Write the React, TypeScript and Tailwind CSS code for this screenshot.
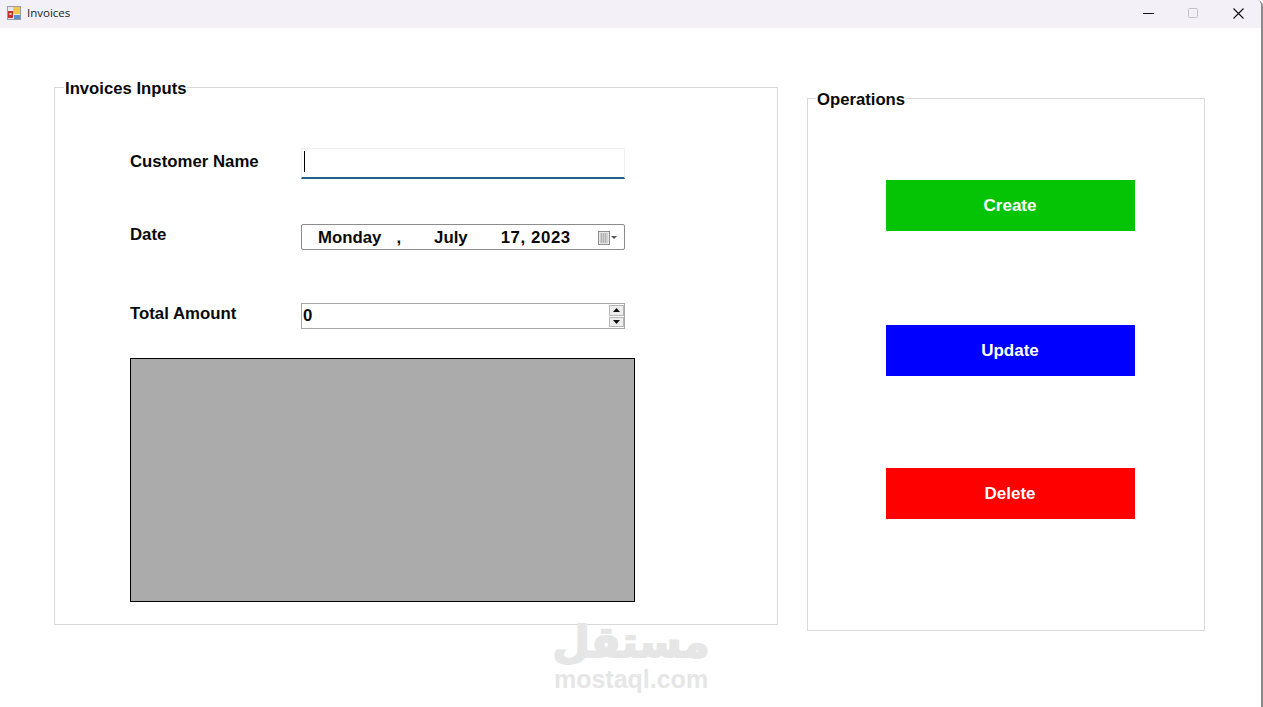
import React from 'react';

function AppIcon() {
  return (
    <svg width="14" height="14" viewBox="0 0 14 14" className="shrink-0 -mt-[2px]">
      <rect x="0.5" y="0.5" width="13" height="13" fill="#e9e6ee" stroke="#9a9aa5" />
      <rect x="1" y="5" width="5" height="7" fill="#c8312b" />
      <rect x="2.5" y="7" width="2" height="2" fill="#f3d0c8" />
      <rect x="6" y="1" width="7" height="7" fill="#f2c84b" />
      <rect x="7" y="9" width="6" height="4" fill="#5b8fd0" />
    </svg>
  );
}

function TitleBar() {
  return (
    <div className="h-[28px] bg-[#f3f0f7] flex items-center pl-[7px] shrink-0">
      <AppIcon />
      <span className="ml-[6px] -mt-[2px] text-[11.5px] text-[#1a1a1a] font-['Open_Sans',sans-serif]">Invoices</span>
      <div className="ml-auto flex items-center pr-[17px] -mt-[2px]">
        <svg width="11" height="11" viewBox="0 0 11 11">
          <path d="M0 5.5H11" stroke="#111" strokeWidth="1.2" />
        </svg>
        <svg width="11" height="11" viewBox="0 0 11 11" className="ml-[34px]">
          <rect x="0.5" y="0.5" width="9" height="9" rx="1" fill="none" stroke="#c4c2c8" />
        </svg>
        <svg width="11" height="11" viewBox="0 0 11 11" className="ml-[34px]">
          <path d="M0.5 0.5L10.5 10.5M10.5 0.5L0.5 10.5" stroke="#111" strokeWidth="1.1" />
        </svg>
      </div>
    </div>
  );
}

function CalendarIcon() {
  return (
    <svg width="20" height="14" viewBox="0 0 20 14">
      <rect x="0.5" y="0.5" width="11" height="13" fill="#e8e8e8" stroke="#8f8f8f" />
      <path d="M2 3H10M2 5H10M2 7H10M2 9H10M2 11H10M3.5 2V12M5.5 2V12M7.5 2V12" stroke="#a5a5a5" strokeWidth="0.7" />
      <path d="M13 5H19L16 8Z" fill="#555" />
    </svg>
  );
}

function Spinner() {
  return (
    <div className="ml-auto w-[15px] h-[22px] flex flex-col gap-[1px]">
      <div className="flex-1 bg-[#ececec] border border-[#b5b5b5] flex items-center justify-center">
        <svg width="7" height="4" viewBox="0 0 7 4"><path d="M3.5 0L7 4H0Z" fill="#111" /></svg>
      </div>
      <div className="flex-1 bg-[#ececec] border border-[#b5b5b5] flex items-center justify-center">
        <svg width="7" height="4" viewBox="0 0 7 4"><path d="M0 0H7L3.5 4Z" fill="#111" /></svg>
      </div>
    </div>
  );
}

function GroupBox({ title, className, legendClass, children }: { title: string; className: string; legendClass: string; children: React.ReactNode }) {
  return (
    <div className={`relative border border-[#d9d9d9] shrink-0 ${className}`}>
      <span className={`absolute top-[-9px] bg-white px-[1px] text-[16.7px] leading-[20px] font-bold text-[#0a0a0a] ${legendClass}`}>
        {title}
      </span>
      {children}
    </div>
  );
}

function ActionButton({ label, color, className }: { label: string; color: string; className: string }) {
  return (
    <button className={`w-[249px] h-[51px] flex items-center justify-center pr-[1px] text-white text-[17px] font-bold ${color} ${className}`}>
      {label}
    </button>
  );
}

export default function App() {
  return (
    <div className="relative w-[1263px] h-[707px] overflow-hidden bg-white border-r-2 border-[#8a8a8a] rounded-tr-[6px] flex flex-col font-['Liberation_Sans',Arial,sans-serif]">
      <TitleBar />

      <div className="flex items-start pl-[54px] pt-[59px]">
        <GroupBox title="Invoices Inputs" legendClass="left-[9px]" className="w-[724px] h-[538px] pl-[75px] pt-[60px]">
          <div className="flex h-[31px]">
            <span className="w-[171px] pt-[1px] text-[16.8px] leading-[26px] font-bold text-[#0a0a0a]">Customer Name</span>
            <div className="w-[324px] h-[31px] border border-[#f0f0f0] border-b-2 border-b-[#1f6488] pl-[2px] pt-[2px]">
              <div className="w-[1px] h-[21px] bg-black" />
            </div>
          </div>

          <div className="flex h-[26px] mt-[45px]">
            <span className="w-[171px] pt-[1px] text-[16.8px] leading-[20px] font-bold text-[#0a0a0a]">Date</span>
            <div className="w-[324px] h-[26px] border border-[#8c8c8c] rounded-[2px] flex items-center pl-[16px] pt-[1px] text-[16.8px] font-bold text-[#0a0a0a]">
              <span>Monday</span>
              <span className="ml-[15px]">,</span>
              <span className="ml-[33px]">July</span>
              <span className="ml-[33px] tracking-[0.6px]">17, 2023</span>
              <span className="ml-auto mr-[6px] flex"><CalendarIcon /></span>
            </div>
          </div>

          <div className="flex h-[26px] mt-[53px]">
            <span className="w-[171px] pt-[1px] text-[16.8px] leading-[20px] font-bold text-[#0a0a0a]">Total Amount</span>
            <div className="w-[324px] h-[26px] border border-[#a8a8a8] flex items-center pl-[1px] text-[16.8px] font-bold text-[#0a0a0a]">
              <span>0</span>
              <Spinner />
            </div>
          </div>

          <div className="w-[505px] h-[244px] mt-[29px] bg-[#ababab] border border-black" />
        </GroupBox>

        <GroupBox title="Operations" legendClass="left-[8px]" className="w-[398px] h-[533px] ml-[29px] mt-[11px] pl-[78px] pt-[81px]">
          <ActionButton label="Create" color="bg-[#05c405]" className="" />
          <ActionButton label="Update" color="bg-[#0000ff]" className="mt-[94px]" />
          <ActionButton label="Delete" color="bg-[#ff0000]" className="mt-[92px]" />
        </GroupBox>
      </div>

      {/* site watermark over the window */}
      <div className="absolute left-[554px] top-[612px] w-[154px] flex flex-col items-center text-[#e6e6e6] font-bold pointer-events-none">
        <span dir="rtl" className="text-[43px] leading-[60px] [-webkit-text-stroke:2px_#e6e6e6] font-['DejaVu_Sans',sans-serif]">مستقل</span>
        <span className="text-[25px] leading-[28px] -mt-[7px] font-['Liberation_Sans',sans-serif]">mostaql.com</span>
      </div>
    </div>
  );
}
